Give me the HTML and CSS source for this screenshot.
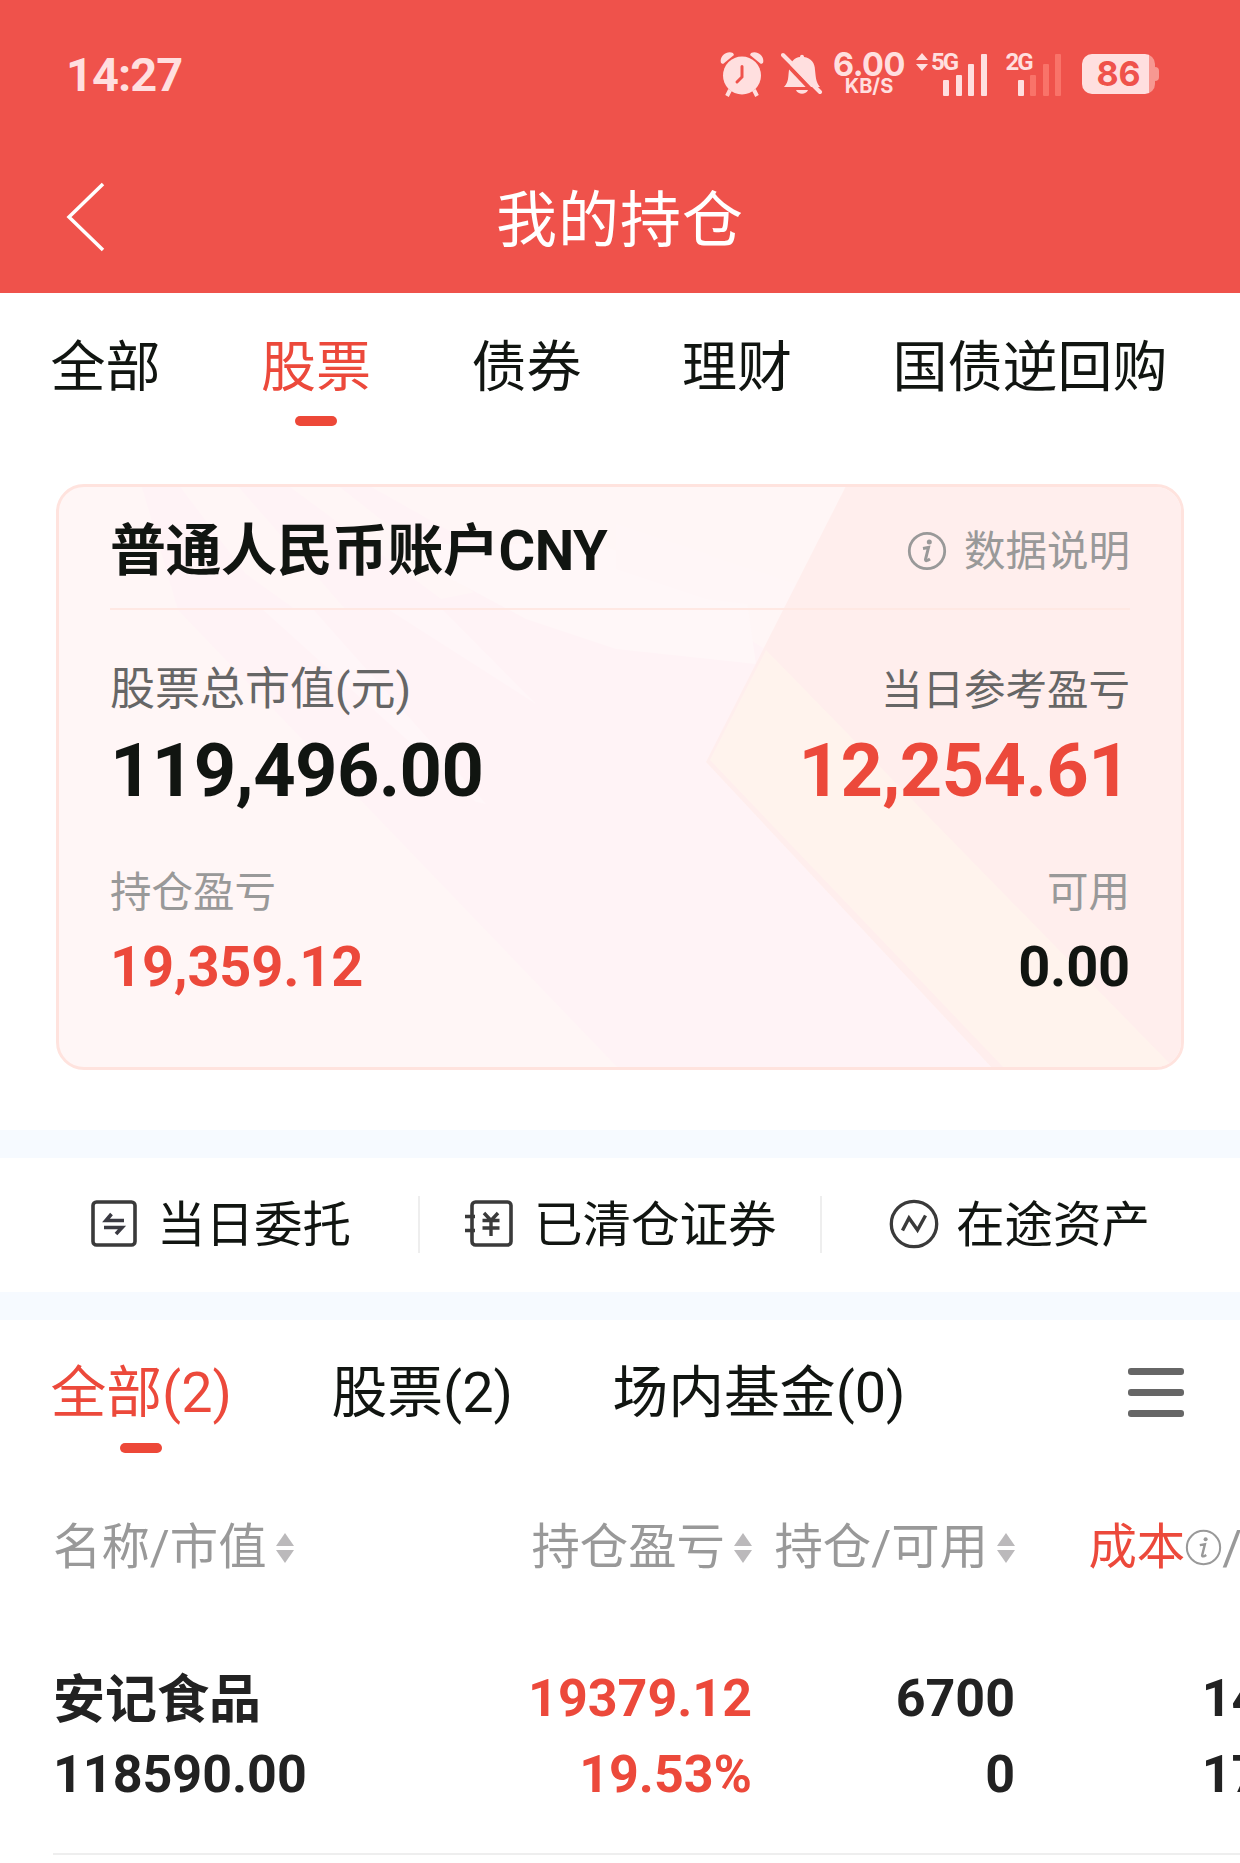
FILE: index.html
```
<!DOCTYPE html>
<html lang="zh-CN">
<head>
    <meta charset="UTF-8">
    <meta name="viewport" content="width=device-width, initial-scale=1.0">
    <title>我的持仓</title>
    <link rel="stylesheet" href="styles.css">
</head>
<body>
    <header class="header">
        <div class="status-bar">
            <span class="time">14:27</span>
            <div class="status-icons">
                <svg class="icon-alarm" width="44" height="46" viewBox="0 0 44 46">
                    <path d="M1 12C-1 5 7 -1 13 2L14 4L3 13Z" fill="#ffdfdf"/>
                    <path d="M43 12C45 5 37 -1 31 2L30 4L41 13Z" fill="#ffdfdf"/>
                    <path d="M10 39L7 45M34 39L37 45" stroke="#ffdfdf" stroke-width="4"/>
                    <circle cx="22" cy="24.5" r="19" fill="#ffdfdf"/>
                    <path d="M22 15.500V26L17 31" fill="none" stroke="#ef524b" stroke-width="3" stroke-linecap="round"/>
                </svg>
                <svg class="icon-bell" width="42" height="44" viewBox="0 0 42 44">
                    <path d="M3 35C8 30 7 24 8 18C9 10 14 5 19 5C19 2 23 2 23 5C30 6 34 11 34 18C35 27 35 30 39 35Z" fill="#ffdfdf"/>
                    <path d="M15 38H27C25 43 17 43 15 38Z" fill="#ffdfdf"/>
                    <path d="M0 6L35 43" stroke="#ef524b" stroke-width="4"/>
                    <path d="M2 3L39 40" stroke="#ffdfdf" stroke-width="4" stroke-linecap="round"/>
                </svg>
                <div class="net-speed">
                    <span class="speed">6.00</span>
                    <span class="unit">KB/S</span>
                </div>
                <div class="signal signal-5g">
                    <svg class="data-arrows" width="12" height="18" viewBox="0 0 12 18">
                        <path d="M6 0L12 7H0ZM0 11H12L6 18Z" fill="#ffdfdf"/>
                    </svg>
                    <span class="net">5G</span>
                    <div class="bars"><i></i><i></i><i></i><i></i></div>
                </div>
                <div class="signal signal-2g">
                    <span class="net">2G</span>
                    <div class="bars weak"><i></i><i></i><i></i><i></i></div>
                </div>
                <div class="battery"><span>86</span></div>
            </div>
        </div>
        <div class="nav">
            <svg class="back" width="40" height="72" viewBox="0 0 40 72">
                <path d="M37 3L3 36L37 69" fill="none" stroke="#fff" stroke-width="3.500"/>
            </svg>
            <h1>我的持仓</h1>
        </div>
    </header>

    <nav class="tabs main-tabs">
        <a>全部</a>
        <a class="active">股票</a>
        <a>债券</a>
        <a>理财</a>
        <a>国债逆回购</a>
    </nav>

    <section class="card">
        <svg class="card-bg" viewBox="0 0 1128 586" preserveAspectRatio="none">
            <path d="M85 0H122L190 90L240 126H330L560 80L640 120L710 166L650 278L938 586H564L122 126Z" fill="#fff3f6"/>
            <path d="M180 0H230L400 126H290ZM280 0H310L470 90L540 110L440 126Z" fill="#fff3f6"/>
            <path d="M330 60L470 135L560 165L700 180L690 110L540 60Z" fill="#fff7f8"/>
            <path d="M205 124L256 124L430 320L420 318ZM330 124L385 124L480 220Z" fill="#fff6f8"/>
            <path d="M560 85L650 115L730 125L740 100L560 40Z" fill="#fff6f7"/>
            <path d="M791 0L650 278L938 586H1128V0Z" fill="#ffeeed"/>
            <path d="M710 166L654 276L950 586H1120Z" fill="#fff3ed"/>
        </svg>
        <div class="card-head">
            <h2>普通人民币账户CNY</h2>
            <div class="explain">
                <svg width="40" height="40" viewBox="0 0 40 40">
                    <circle cx="20" cy="20" r="17.700" fill="none" stroke="#999" stroke-width="2.800"/>
                    <circle cx="22.300" cy="11" r="2.500" fill="#999"/>
                    <path d="M16 17.500L21.500 16.500L18.500 28.500Q18.500 31 23 28" fill="none" stroke="#999" stroke-width="3"/>
                </svg>
                <span>数据说明</span>
            </div>
        </div>
        <div class="card-row">
            <div class="cell">
                <span class="label dark large">股票总市值(元)</span>
                <span class="value big">119,496.00</span>
            </div>
            <div class="cell right">
                <span class="label dark">当日参考盈亏</span>
                <span class="value big red">12,254.61</span>
            </div>
        </div>
        <div class="card-row second">
            <div class="cell">
                <span class="label">持仓盈亏</span>
                <span class="value red">19,359.12</span>
            </div>
            <div class="cell right">
                <span class="label">可用</span>
                <span class="value">0.00</span>
            </div>
        </div>
    </section>

    <section class="shortcuts">
        <a class="shortcut">
            <svg width="46" height="48" viewBox="0 0 46 48">
                <rect x="2" y="2" width="42" height="43" rx="3.500" fill="none" stroke="#3a3a3a" stroke-width="3.600"/>
                <path d="M33 20.500H15L20.500 14M13 27.500H31L25 34" fill="none" stroke="#3a3a42" stroke-width="3.600"/>
            </svg>
            <span>当日委托</span>
        </a>
        <a class="shortcut">
            <svg width="50" height="48" viewBox="0 0 50 48">
                <rect x="8" y="2" width="39" height="43" rx="3.500" fill="none" stroke="#3a3a3a" stroke-width="3.600"/>
                <path d="M1 16.500H11M1 30.500H11" stroke="#3a3a3a" stroke-width="3.400"/>
                <path d="M20 13L27 20.500L34 13M27 20.500V36M18.500 20.500H35.500M18.500 28H35.500" fill="none" stroke="#3a3a3a" stroke-width="3.400"/>
            </svg>
            <span>已清仓证券</span>
        </a>
        <a class="shortcut">
            <svg width="50" height="50" viewBox="0 0 50 50">
                <circle cx="25" cy="25" r="22.700" fill="none" stroke="#3a3a3a" stroke-width="3.300"/>
                <path d="M13.500 31.500L20 19L28.500 31L36.500 16.500" fill="none" stroke="#3a3a3a" stroke-width="3.400"/>
            </svg>
            <span>在途资产</span>
        </a>
    </section>

    <div class="list-head">
        <nav class="tabs">
            <a class="active">全部(2)</a>
            <a>股票(2)</a>
            <a>场内基金(0)</a>
        </nav>
        <div class="menu"><i></i><i></i><i></i></div>
    </div>

    <section class="table">
        <div class="row table-head">
            <div class="col"><span>名称/市值</span><i class="sort"></i></div>
            <div class="col"><span>持仓盈亏</span><i class="sort"></i></div>
            <div class="col"><span>持仓/可用</span><i class="sort"></i></div>
            <div class="col">
                <span class="red">成本</span>
                <svg width="37" height="37" viewBox="0 0 40 40">
                    <circle cx="20" cy="20" r="18" fill="none" stroke="#999" stroke-width="2.200"/>
                    <circle cx="22.300" cy="11" r="2.200" fill="#999"/>
                    <path d="M16 17.500L21.500 16.500L18.500 28.500Q18.500 31 23 28" fill="none" stroke="#999" stroke-width="2.600"/>
                </svg>
                <span>/现价</span><i class="sort"></i>
            </div>
        </div>
        <div class="row stock">
            <div class="col"><span class="name">安记食品</span><span>118590.00</span></div>
            <div class="col red"><span>19379.12</span><span>19.53%</span></div>
            <div class="col"><span>6700</span><span>0</span></div>
            <div class="col"><span>14.807</span><span>17.700</span></div>
        </div>
    </section>
</body>
</html>
```
FILE: styles.css
```
* {
    box-sizing: border-box;
    margin: 0;
    padding: 0;
}

body {
    width: 1240px;
    height: 1863px;
    overflow: hidden;
    background-color: #fff;
    color: #111511;
    font-family: Roboto, "Noto Sans CJK SC", sans-serif;
}

svg {
    display: block;
    flex-shrink: 0;
}

.red {
    color: #ec493b;
}

/* header */
.header {
    height: 293px;
    background-color: #ef524b;
    color: #fff;
}

.status-bar {
    height: 148px;
    padding: 0 81px 0 66px;
    display: flex;
    justify-content: space-between;
    align-items: center;
    color: #ffdfdf;
}

.time {
    font-size: 47px;
    font-weight: 700;
    letter-spacing: -1px;
}

.status-icons {
    display: flex;
    align-items: center;
    height: 44px;
    font-family: Inter, sans-serif;
}

.icon-bell {
    margin-left: 17px;
}

.net-speed {
    width: 74px;
    margin-left: 9px;
    display: flex;
    flex-direction: column;
    align-items: center;
    font-weight: 700;
}

.speed {
    font-size: 32.500px;
    line-height: 25px;
    letter-spacing: -0.500px;
}

.unit {
    font-size: 20px;
    line-height: 19px;
}

.signal {
    display: flex;
    align-items: flex-start;
    height: 43px;
}

.signal-5g {
    margin-left: 10px;
}

.signal-2g {
    margin-left: 19px;
}

.net {
    width: 28px;
    margin-left: 3px;
    margin-right: -16px;
    font-family: Roboto, sans-serif;
    font-size: 24px;
    line-height: 19px;
    font-weight: 700;
    letter-spacing: -2px;
}

.signal-2g .net {
    margin-left: 0;
}

.bars {
    display: flex;
    align-items: flex-end;
    gap: 6.500px;
    height: 43px;
}

.bars i {
    width: 6px;
    height: 16px;
    border-radius: 1px;
    background-color: #ffdfdf;
}

.bars i:nth-child(2) {
    height: 21px;
}

.bars i:nth-child(3) {
    height: 32px;
}

.bars i:nth-child(4) {
    height: 42px;
}

.weak i:nth-child(n+2) {
    background-color: #f97369;
}

.battery {
    position: relative;
    width: 73px;
    height: 40px;
    margin-left: 21px;
    margin-right: 4px;
    border-radius: 10px;
    background: linear-gradient(to right, #ffdfdf 67px, #f79891 67px);
    color: #ef524b;
    text-align: center;
    font-size: 34px;
    line-height: 40px;
    font-weight: 700;
}

.battery::after {
    content: "";
    position: absolute;
    left: 73px;
    top: 13px;
    width: 4px;
    height: 14px;
    border-radius: 0 4px 4px 0;
    background-color: #f79891;
}

.nav {
    display: grid;
    grid-template-columns: 1fr auto 1fr;
    align-items: center;
    height: 145px;
    padding: 0 66px;
}

.nav h1 {
    font-size: 61px;
    line-height: 80px;
    font-weight: 400;
    letter-spacing: 1px;
}

.back {
    margin-top: -8px;
}

/* tabs */
.tabs {
    display: flex;
    gap: 100.500px;
}

.tabs a {
    display: flex;
    flex-direction: column;
    align-items: center;
    font-size: 55px;
    line-height: 72px;
    white-space: nowrap;
}

.tabs .active {
    color: #ec493b;
}

.tabs .active::after {
    content: "";
    width: 42px;
    height: 10px;
    margin-top: 13px;
    border-radius: 5px;
    background-color: #ed4838;
}

.main-tabs {
    height: 191px;
    padding: 38px 0 0 50.500px;
}

/* account card */
.card {
    position: relative;
    width: 1128px;
    height: 586px;
    margin: 0 auto 60px;
    padding: 0 51px;
    border: 3px solid #ffe3de;
    border-radius: 28px;
    background-color: #fff6f6;
    overflow: hidden;
}

.card-bg {
    position: absolute;
    left: -3px;
    top: -3px;
    width: 1128px;
    height: 586px;
    z-index: 0;
}

.card-head,
.card-row {
    position: relative;
    display: flex;
    justify-content: space-between;
}

.card-head {
    align-items: center;
    height: 123px;
    padding-top: 6px;
    border-bottom: 2px solid #ffe8e3;
}

.card-head h2 {
    font-size: 56px;
    line-height: 70px;
    font-weight: 700;
    letter-spacing: -0.500px;
}

.explain {
    display: flex;
    align-items: center;
    gap: 17px;
    color: #999;
    font-size: 41.500px;
    line-height: 62px;
}

.explain span {
    padding-top: 2px;
}

.card-row {
    padding-top: 50px;
}

.second {
    padding-top: 52px;
}

.cell {
    display: flex;
    flex-direction: column;
}

.right {
    align-items: flex-end;
}

.label {
    margin-bottom: 11px;
    color: #999;
    font-size: 41.500px;
    line-height: 60px;
}

.right .dark {
    padding-top: 1px;
    margin-bottom: 10px;
}

.second .label {
    margin-bottom: 9px;
}

.dark {
    color: #666;
}

.large {
    font-size: 45px;
}

.value {
    font-size: 56px;
    line-height: 70px;
    font-weight: 700;
    letter-spacing: -0.200px;
}

.big {
    font-size: 74px;
    line-height: 80px;
    letter-spacing: -0.600px;
}

/* shortcuts */
.shortcuts {
    display: grid;
    grid-template-columns: 420px 402px 418px;
    align-items: center;
    height: 190px;
    border-top: 28px solid #f6faff;
    border-bottom: 28px solid #f6faff;
}

.shortcut {
    display: flex;
    align-items: center;
    height: 57px;
    margin-bottom: 2px;
    padding-left: 91px;
    border-right: 2px solid #eee;
    font-size: 48.500px;
    line-height: 57px;
    white-space: nowrap;
}

.shortcut span {
    margin-left: 20px;
    padding-top: 2px;
}

.shortcut:nth-child(2) {
    padding-left: 44px;
}

.shortcut:nth-child(3) {
    padding-left: 67px;
    border-right: none;
}

.shortcut:nth-child(3) span {
    margin-left: 17px;
}

/* list */
.list-head {
    display: flex;
    justify-content: space-between;
    height: 197px;
    padding: 37px 56px 0 50.500px;
}

.list-head .tabs {
    gap: 99.500px;
}

.list-head .tabs a {
    font-size: 55.800px;
}

.list-head .active::after {
    margin-top: 14px;
}

.menu {
    display: flex;
    flex-direction: column;
    gap: 14px;
    padding-top: 11px;
}

.menu i {
    width: 56px;
    height: 7px;
    border-radius: 3px;
    background-color: #666;
}

.table {
    padding-left: 53px;
    overflow: hidden;
}

.row {
    display: grid;
    grid-template-columns: 302px 397px 263px 351px;
    width: 1313px;
}

.table-head {
    color: #999;
    font-size: 48.400px;
    line-height: 60px;
}

.table-head .col {
    display: flex;
    align-items: center;
    justify-content: flex-end;
    white-space: nowrap;
}

.table-head span {
    position: relative;
    top: 1px;
}

.table-head .col:first-child {
    justify-content: flex-start;
}

.sort {
    display: flex;
    flex-direction: column;
    gap: 4px;
    margin-left: 9px;
    padding-top: 2px;
}

.sort::before,
.sort::after {
    content: "";
    border-left: 9px solid transparent;
    border-right: 9px solid transparent;
}

.sort::before {
    border-bottom: 13px solid #bbb9bb;
}

.sort::after {
    border-top: 13px solid #bbb9bb;
}

.stock {
    height: 278px;
    padding-top: 84px;
    border-bottom: 2px solid #eee;
    color: #222;
    font-size: 52px;
    line-height: 76px;
    font-weight: 700;
}

.stock .col {
    display: flex;
    flex-direction: column;
    align-items: flex-end;
}

.stock .col:first-child {
    align-items: flex-start;
}

.stock .name {
    height: 76px;
    line-height: 80px;
}

.stock .red {
    color: #ec493b;
}
```
